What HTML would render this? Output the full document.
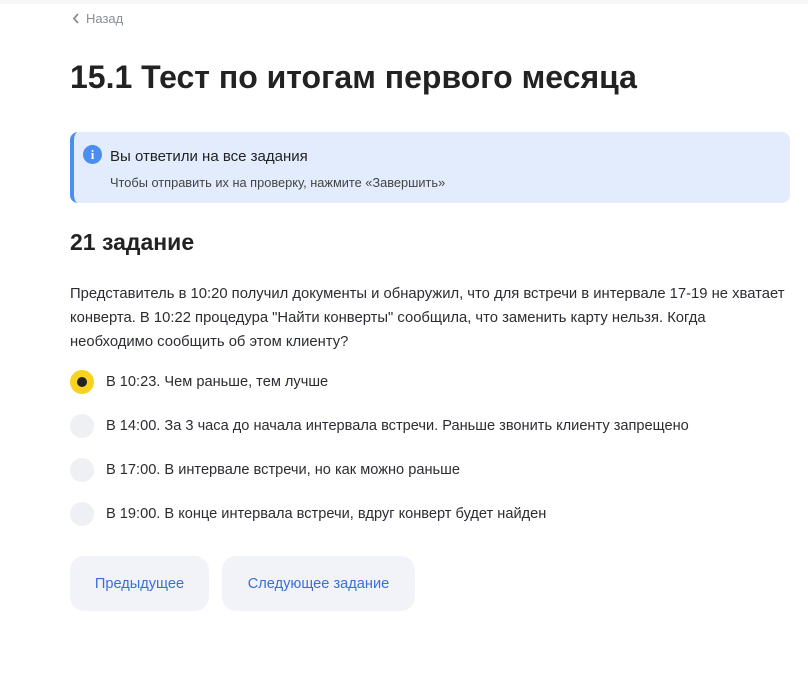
<!DOCTYPE html>
<html><head><meta charset="utf-8"><style>
body{margin:0;width:808px;height:677px;background:#fff;font-family:"Liberation Sans",sans-serif;color:#2b2d33;position:relative;overflow:hidden}
.topbar{position:absolute;left:0;top:0;width:808px;height:4px;background:#f6f6f8}
.back{position:absolute;left:72px;top:11px;font-size:13px;color:#8a8d96}
h1{position:absolute;left:70px;top:59px;margin:0;font-size:32px;font-weight:bold;color:#222}
.banner{position:absolute;left:70px;top:132px;width:720px;height:71px;background:#e3ecfc;border-radius:8px;box-sizing:border-box;border-left:4px solid #4a8ef0}
.banner .ic{position:absolute;left:9px;top:13px;width:19px;height:19px;border-radius:50%;background:#4a8ef0;color:#fff;font:bold 13px "Liberation Serif",serif;text-align:center;line-height:19px}
.banner .t1{position:absolute;left:36px;top:16px;font-size:15px;color:#222}
.banner .t2{position:absolute;left:36px;top:43px;font-size:12.8px;color:#444}
h2{position:absolute;left:70px;top:229px;margin:0;font-size:23px;font-weight:bold;color:#222}
.q{position:absolute;left:70px;top:282px;width:715px;font-size:14.8px;line-height:24px;color:#2b2d33}
.opt{position:absolute;left:70px;font-size:14.6px;color:#2b2d33}
.opt .r{position:absolute;left:0;top:-3px;width:24px;height:24px;border-radius:50%;background:#eef0f4}
.opt .r.on{background:#f7d21f}
.opt .r.on:after{content:"";position:absolute;left:7px;top:7px;width:10px;height:10px;border-radius:50%;background:#222}
.opt span{position:absolute;left:36px;top:1px;white-space:nowrap}
.btn{position:absolute;top:556px;height:55px;background:#f2f3f8;border-radius:14px;color:#3a6fd8;font-size:14.6px;line-height:57px;text-align:center}
</style></head><body>
<div class="topbar"></div>
<div class="back"><svg width="8" height="11" viewBox="0 0 8 11" style="vertical-align:-1px;margin-right:6px"><path d="M6 1L2 5.5L6 10" stroke="#8a8d96" stroke-width="1.8" fill="none"/></svg>Назад</div>
<h1>15.1 Тест по итогам первого месяца</h1>
<div class="banner"><div class="ic">i</div><div class="t1">Вы ответили на все задания</div><div class="t2">Чтобы отправить их на проверку, нажмите «Завершить»</div></div>
<h2>21 задание</h2>
<div class="q">Представитель в 10:20 получил документы и обнаружил, что для встречи в интервале 17-19 не хватает конверта. В 10:22 процедура "Найти конверты" сообщила, что заменить карту нельзя. Когда необходимо сообщить об этом клиенту?</div>
<div class="opt" style="top:373px"><div class="r on"></div><span>В 10:23. Чем раньше, тем лучше</span></div>
<div class="opt" style="top:417px"><div class="r"></div><span>В 14:00. За 3 часа до начала интервала встречи. Раньше звонить клиенту запрещено</span></div>
<div class="opt" style="top:461px"><div class="r"></div><span>В 17:00. В интервале встречи, но как можно раньше</span></div>
<div class="opt" style="top:505px"><div class="r"></div><span>В 19:00. В конце интервала встречи, вдруг конверт будет найден</span></div>
<div class="btn" style="left:70px;width:139px">Предыдущее</div>
<div class="btn" style="left:222px;width:193px">Следующее задание</div>
</body></html>
